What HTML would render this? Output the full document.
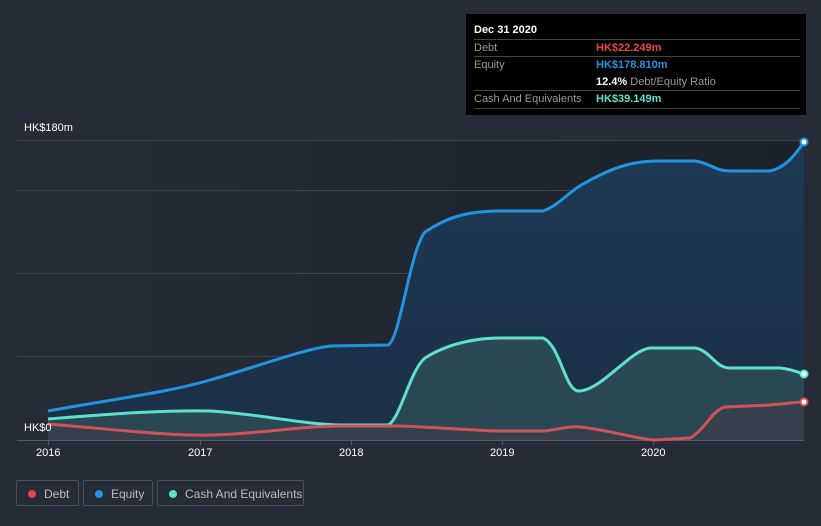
<!DOCTYPE html>
<html><head><style>
body{margin:0;width:821px;height:526px;background:#262c37;font-family:"Liberation Sans",sans-serif;overflow:hidden;position:relative}
.tt{position:absolute;left:466px;top:14px;width:340px;height:101px;background:#000;color:#fff;font-size:11px}
.tt .r{position:absolute;left:8px;right:6px;height:17px;border-top:1px solid #444;line-height:17px}
.tt .l{color:#999;position:absolute;left:0}
.tt .v{position:absolute;left:122px;font-weight:bold}
.leg{position:absolute;top:480px;height:26px;border:1px solid #4a505b;border-radius:2px;color:#bbb;font-size:12px;line-height:26px;box-sizing:border-box}
.leg i{position:absolute;left:11px;top:9px;width:8px;height:8px;border-radius:50%}
.leg span{position:absolute;left:27px}
.ax{position:absolute;color:#fff;font-size:11px}
</style></head><body>
<svg width="821" height="526" style="position:absolute;left:0;top:0">
<defs>
<linearGradient id="bg" x1="0" x2="1"><stop offset="0" stop-color="#262c37"/><stop offset="1" stop-color="#1c222c"/></linearGradient>
<linearGradient id="eq" x1="0" y1="0" x2="0" y2="1"><stop offset="0" stop-color="#1e3a56"/><stop offset="1" stop-color="#1c2f45"/></linearGradient>
</defs>
<rect x="48" y="140" width="756" height="300" fill="url(#bg)"/>
<g stroke="#3a414c" stroke-width="1">
<line x1="17" y1="140.5" x2="804" y2="140.5"/><line x1="17" y1="190.5" x2="804" y2="190.5"/>
<line x1="17" y1="273.5" x2="804" y2="273.5"/><line x1="17" y1="356.5" x2="804" y2="356.5"/>
<line x1="17" y1="440.5" x2="804" y2="440.5" stroke="#555b66"/>
<line x1="48.5" y1="440" x2="48.5" y2="445" stroke="#555b66"/><line x1="200.5" y1="440" x2="200.5" y2="445" stroke="#555b66"/><line x1="351.5" y1="440" x2="351.5" y2="445" stroke="#555b66"/><line x1="502.5" y1="440" x2="502.5" y2="445" stroke="#555b66"/><line x1="653.5" y1="440" x2="653.5" y2="445" stroke="#555b66"/>
</g>
<path d="M48,411 C120,398 170,392 210,380 C260,366 300,350 330,346 L388,345 C400,340 410,250 425,232 C450,215 470,212 495,211 L543,211 C560,205 570,190 585,183 C620,163 640,161 660,161 L695,161 C710,163 715,171 730,171 L770,171 C785,168 795,155 804,142 L804,440 L48,440Z" fill="url(#eq)"/>
<path d="M48,419 C120,413 170,410 210,411 C260,414 300,424 340,425 L388,425 C400,420 410,370 425,358 C450,342 480,338 500,338 L543,338 C560,345 565,390 578,391 C600,392 630,350 650,348 L695,348 C710,350 715,368 730,368 L780,368 C790,369 798,372 804,374 L804,440 L48,440Z" fill="#2e4f58" fill-opacity="0.8"/>
<path d="M48,424 C120,430 170,436 210,435 C260,434 300,426 340,426 L400,426 C450,428 480,431 500,431 L545,431 C560,429 570,426 580,427 C610,430 640,440 655,440 L690,438 C705,430 712,410 725,407 L770,405 C785,404 795,402 804,402 L804,440 L48,440Z" fill="#3a3f4a" fill-opacity="0.8"/>
<path d="M48,411 C120,398 170,392 210,380 C260,366 300,350 330,346 L388,345 C400,340 410,250 425,232 C450,215 470,212 495,211 L543,211 C560,205 570,190 585,183 C620,163 640,161 660,161 L695,161 C710,163 715,171 730,171 L770,171 C785,168 795,155 804,142" fill="none" stroke="#2394e0" stroke-width="3"/>
<path d="M48,419 C120,413 170,410 210,411 C260,414 300,424 340,425 L388,425 C400,420 410,370 425,358 C450,342 480,338 500,338 L543,338 C560,345 565,390 578,391 C600,392 630,350 650,348 L695,348 C710,350 715,368 730,368 L780,368 C790,369 798,372 804,374" fill="none" stroke="#5fe0cc" stroke-width="3"/>
<path d="M48,424 C120,430 170,436 210,435 C260,434 300,426 340,426 L400,426 C450,428 480,431 500,431 L545,431 C560,429 570,426 580,427 C610,430 640,440 655,440 L690,438 C705,430 712,410 725,407 L770,405 C785,404 795,402 804,402" fill="none" stroke="#d0525b" stroke-width="3"/>
<circle cx="804" cy="142" r="3.5" fill="#fff" stroke="#2394e0" stroke-width="2"/>
<circle cx="804" cy="374" r="3.5" fill="#fff" stroke="#5fe0cc" stroke-width="2"/>
<circle cx="804" cy="402" r="3.5" fill="#fff" stroke="#e34f52" stroke-width="2"/>
</svg>
<div class="ax" style="left:24px;top:122px">HK$180m</div>
<div class="ax" style="left:24px;top:422px">HK$0</div>
<div class="ax" style="left:36px;top:447px">2016</div>
<div class="ax" style="left:188px;top:447px">2017</div>
<div class="ax" style="left:339px;top:447px">2018</div>
<div class="ax" style="left:490px;top:447px">2019</div>
<div class="ax" style="left:641px;top:447px">2020</div>
<div class="tt">
<div style="position:absolute;left:8px;top:10px;font-weight:bold">Dec 31 2020</div>
<div class="r" style="top:25px"><span class="l">Debt</span><span class="v" style="color:#e8474b">HK$22.249m</span></div>
<div class="r" style="top:42px"><span class="l">Equity</span><span class="v" style="color:#2394e0">HK$178.810m</span></div>
<div style="position:absolute;left:130px;top:60px;line-height:17px"><b>12.4%</b> <span style="color:#999">Debt/Equity Ratio</span></div>
<div class="r" style="top:76px;border-bottom:1px solid #444"><span class="l">Cash And Equivalents</span><span class="v" style="color:#5fe0cc">HK$39.149m</span></div>
</div>
<div class="leg" style="left:16px;width:63px"><i style="background:#e8474b"></i><span>Debt</span></div>
<div class="leg" style="left:83px;width:70px"><i style="background:#2394e0"></i><span>Equity</span></div>
<div class="leg" style="left:157px;width:147px"><i style="background:#5fe0cc"></i><span>Cash And Equivalents</span></div>
</body></html>
